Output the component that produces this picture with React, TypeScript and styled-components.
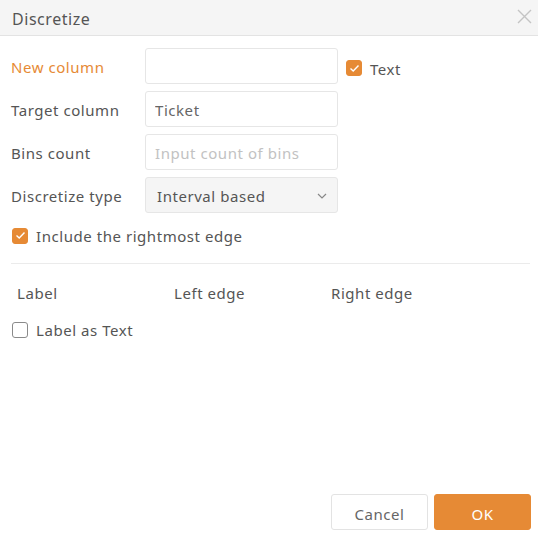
import React from "react";
import styled, { createGlobalStyle } from "styled-components";

const Global = createGlobalStyle`
  html, body { margin: 0; padding: 0; background: #fff; }
  body { font-family: "Noto Sans", "Open Sans", sans-serif; color: #555; letter-spacing: 0.55px; }
  * { box-sizing: border-box; }
`;

const Dialog = styled.div`
  width: 538px;
  height: 538px;
  display: flex;
  flex-direction: column;
  background: #fff;
`;

const Header = styled.div`
  height: 36px;
  flex: none;
  display: flex;
  align-items: center;
  justify-content: space-between;
  padding: 0 6px 0 12px;
  background: #f5f5f5;
  border-bottom: 1px solid #e3e3e3;
`;

const Title = styled.div`
  font-size: 16px;
  color: #555;
  padding-top: 2px;
`;

const Close = styled.button`
  border: none;
  background: transparent;
  padding: 0;
  width: 16px;
  height: 16px;
  display: flex;
  align-items: center;
  justify-content: center;
  margin-top: -2px;
  cursor: pointer;
`;

const Body = styled.div`
  flex: 1;
  display: flex;
  flex-direction: column;
  padding: 12px 8px 0 11px;
`;

const Row = styled.div`
  display: flex;
  align-items: center;
  height: 36px;
  margin-bottom: 7px;
`;

const Label = styled.div<{ $accent?: boolean }>`
  width: 134px;
  flex: none;
  font-size: 15px;
  padding-top: 2px;
  color: ${(p) => (p.$accent ? "#e68a35" : "#555")};
`;

const Input = styled.input`
  width: 193px;
  height: 36px;
  border: 1px solid #e6e6e6;
  border-radius: 3px;
  padding: 2px 9px 0;
  font-family: inherit;
  letter-spacing: inherit;
  font-size: 15px;
  color: #666;
  outline: none;
  &::placeholder { color: #c2c2c2; }
`;

const Select = styled.div`
  width: 193px;
  height: 36px;
  border: 1px solid #e6e6e6;
  border-radius: 3px;
  background: #f5f5f5;
  padding: 2px 10px 0 11px;
  display: flex;
  align-items: center;
  justify-content: space-between;
  font-size: 15px;
  color: #555;
`;

const CheckLabel = styled.label<{ $inline?: boolean }>`
  display: flex;
  align-items: center;
  gap: 8px;
  font-size: 15px;
  color: #555;
  margin-left: ${(p) => (p.$inline ? "8px" : "1px")};
  margin-top: ${(p) => (p.$inline ? "5px" : "0")};
`;

const Box = styled.span<{ $checked?: boolean }>`
  width: 16px;
  height: 16px;
  flex: none;
  border-radius: 3px;
  display: flex;
  align-items: center;
  justify-content: center;
  margin-top: -1px;
  background: ${(p) => (p.$checked ? "#e68a35" : "#fff")};
  border: 1px solid ${(p) => (p.$checked ? "#e68a35" : "#8a8a8a")};
`;

const CheckRow = styled.div`
  height: 20px;
  display: flex;
  align-items: center;
  margin-top: 6px;
`;

const Divider = styled.div`
  height: 1px;
  background: #ebebeb;
  margin: 17px 0 0 0;
`;

const Columns = styled.div`
  display: grid;
  grid-template-columns: 157px 157px 157px;
  padding: 19px 0 0 6px;
  font-size: 15px;
  color: #555;
`;

const LabelTextRow = styled.div`
  height: 20px;
  display: flex;
  align-items: center;
  margin-top: 17px;
`;

const Footer = styled.div`
  flex: none;
  display: flex;
  justify-content: flex-end;
  gap: 6px;
  padding: 0 7px 8px 0;
`;

const Button = styled.button<{ $primary?: boolean }>`
  width: 97px;
  height: 36px;
  border-radius: 3px;
  font-family: inherit;
  letter-spacing: inherit;
  font-size: 15px;
  padding: 4px 0 0;
  cursor: pointer;
  border: 1px solid ${(p) => (p.$primary ? "#e68a35" : "#e3e3e3")};
  background: ${(p) => (p.$primary ? "#e68a35" : "#fff")};
  color: ${(p) => (p.$primary ? "#fff" : "#666")};
`;

const Check = () => (
  <svg width="11" height="9" viewBox="0 0 11 9">
    <path d="M1.5 4.5 L4.2 7 L9.5 1.5" fill="none" stroke="#fff" strokeWidth="1.4" />
  </svg>
);

export default function App() {
  return (
    <Dialog>
      <Global />
      <Header>
        <Title>Discretize</Title>
        <Close aria-label="close">
          <svg width="15" height="15" viewBox="0 0 15 15">
            <path d="M1 1 L14 14 M14 1 L1 14" stroke="#c4c4c4" strokeWidth="1.4" />
          </svg>
        </Close>
      </Header>
      <Body>
        <Row>
          <Label $accent>New column</Label>
          <Input />
          <CheckLabel $inline>
            <Box $checked>
              <Check />
            </Box>
            Text
          </CheckLabel>
        </Row>
        <Row>
          <Label>Target column</Label>
          <Input defaultValue="Ticket" />
        </Row>
        <Row>
          <Label>Bins count</Label>
          <Input placeholder="Input count of bins" />
        </Row>
        <Row>
          <Label>Discretize type</Label>
          <Select>
            Interval based
            <svg width="10" height="6" viewBox="0 0 10 6">
              <path d="M1 1 L5 5 L9 1" fill="none" stroke="#888" strokeWidth="1.2" />
            </svg>
          </Select>
        </Row>
        <CheckRow>
          <CheckLabel>
            <Box $checked>
              <Check />
            </Box>
            Include the rightmost edge
          </CheckLabel>
        </CheckRow>
        <Divider />
        <Columns>
          <div>Label</div>
          <div>Left edge</div>
          <div>Right edge</div>
        </Columns>
        <LabelTextRow>
          <CheckLabel>
            <Box />
            Label as Text
          </CheckLabel>
        </LabelTextRow>
      </Body>
      <Footer>
        <Button>Cancel</Button>
        <Button $primary>OK</Button>
      </Footer>
    </Dialog>
  );
}
